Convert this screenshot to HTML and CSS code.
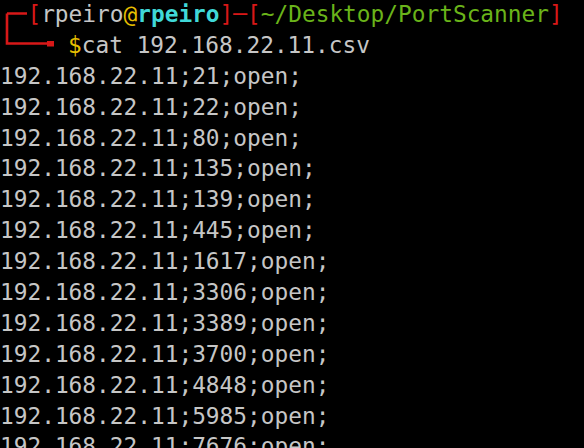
FILE: index.html
```html
<!DOCTYPE html>
<html>
<head>
<meta charset="utf-8">
<link rel="stylesheet" href="styles.css">
</head>
<body>
<div class="term">
<div class="line"><svg class="corner-top" width="27" height="31" viewBox="0 0 27 31"><path d="M7 14.5H27M7 14.5V31" stroke="#d81818" stroke-width="2.6" fill="none"/></svg><span class="r">[</span><span class="g">rpeiro</span><span class="y">@</span><span class="c">rpeiro</span><span class="r">]─[</span><span class="gr">~/Desktop/PortScanner</span><span class="r">]</span></div>
<div class="line"><svg class="corner-bot" width="68" height="31" viewBox="0 0 68 31"><path d="M7 0V13.5H48" stroke="#d81818" stroke-width="2.6" fill="none"/><rect x="47" y="11" width="7" height="5.5" fill="#d81818"/></svg><span class="y">$</span>cat 192.168.22.11.csv</div>
<div class="line">192.168.22.11;21;open;</div>
<div class="line">192.168.22.11;22;open;</div>
<div class="line">192.168.22.11;80;open;</div>
<div class="line">192.168.22.11;135;open;</div>
<div class="line">192.168.22.11;139;open;</div>
<div class="line">192.168.22.11;445;open;</div>
<div class="line">192.168.22.11;1617;open;</div>
<div class="line">192.168.22.11;3306;open;</div>
<div class="line">192.168.22.11;3389;open;</div>
<div class="line">192.168.22.11;3700;open;</div>
<div class="line">192.168.22.11;4848;open;</div>
<div class="line">192.168.22.11;5985;open;</div>
<div class="line">192.168.22.11;7676;open;</div>
</div>
</body>
</html>
```

FILE: styles.css
```css
html, body {
  margin: 0;
  padding: 0;
  background: #000;
  overflow: hidden;
  width: 584px;
  height: 448px;
}
.term {
  font-family: "DejaVu Sans Mono", monospace;
  font-size: 22.8px;
  color: #c6c6c6;
  margin-top: -1px;
}
.line {
  height: 30.9px;
  line-height: 30.9px;
  white-space: pre;
}
.line svg {
  display: inline-block;
  vertical-align: top;
}
.corner-top { margin-right: 0.4px; }
.r { color: #d81818; }
.g { color: #c6c6c6; }
.y { color: #e6bf00; }
.c { color: #40d8d8; font-weight: bold; }
.gr { color: #6ab41a; }
```
